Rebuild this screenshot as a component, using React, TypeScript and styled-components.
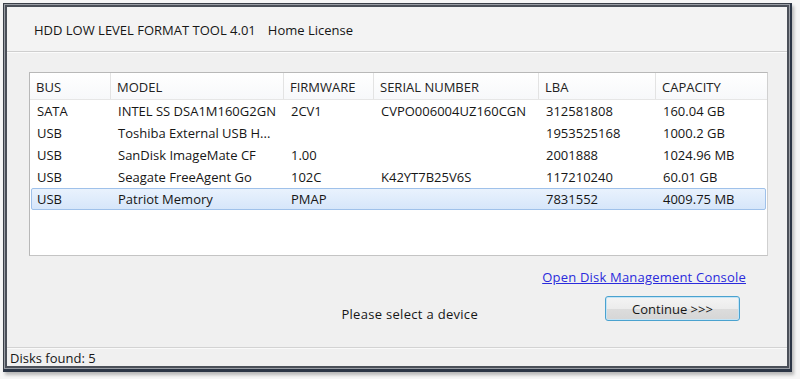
import styled, { createGlobalStyle } from "styled-components";

const GlobalStyle = createGlobalStyle`
  html, body {
    margin: 0;
    padding: 0;
    background: #f6f6f6;
  }
  body {
    font-family: "Open Sans", "Noto Sans", sans-serif;
    font-size: 13px;
    color: #161616;
  }
`;

type Disk = {
  bus: string;
  model: string;
  firmware: string;
  serial: string;
  lba: string;
  capacity: string;
};

const columns = ["BUS", "MODEL", "FIRMWARE", "SERIAL NUMBER", "LBA", "CAPACITY"];

const disks: Disk[] = [
  { bus: "SATA", model: "INTEL SS DSA1M160G2GN", firmware: "2CV1", serial: "CVPO006004UZ160CGN", lba: "312581808", capacity: "160.04 GB" },
  { bus: "USB", model: "Toshiba External USB H...", firmware: "", serial: "", lba: "1953525168", capacity: "1000.2 GB" },
  { bus: "USB", model: "SanDisk ImageMate CF", firmware: "1.00", serial: "", lba: "2001888", capacity: "1024.96 MB" },
  { bus: "USB", model: "Seagate FreeAgent Go", firmware: "102C", serial: "K42YT7B25V6S", lba: "117210240", capacity: "60.01 GB" },
  { bus: "USB", model: "Patriot Memory", firmware: "PMAP", serial: "", lba: "7831552", capacity: "4009.75 MB" },
];

export default function App() {
  return (
    <>
      <GlobalStyle />
      <Page>
        <Window>
          <TitleBar>
            <Title>HDD LOW LEVEL FORMAT TOOL 4.01</Title>
            <Title>Home License</Title>
          </TitleBar>
          <Content>
            <ListBox>
              <HeaderRow>
                {columns.map((c) => (
                  <HeaderCell key={c}>{c}</HeaderCell>
                ))}
              </HeaderRow>
              {disks.map((d, i) => (
                <Row key={i} $selected={i === disks.length - 1}>
                  <Cell>{d.bus}</Cell>
                  <Cell>{d.model}</Cell>
                  <Cell>{d.firmware}</Cell>
                  <Cell>{d.serial}</Cell>
                  <Cell>{d.lba}</Cell>
                  <Cell>{d.capacity}</Cell>
                </Row>
              ))}
            </ListBox>
            <LinkRow>
              <ConsoleLink href="#">Open Disk Management Console</ConsoleLink>
            </LinkRow>
            <ActionRow>
              <Message>Please select a device</Message>
              <ContinueButton>Continue &gt;&gt;&gt;</ContinueButton>
            </ActionRow>
          </Content>
          <StatusBar>Disks found: 5</StatusBar>
        </Window>
      </Page>
    </>
  );
}

const Page = styled.div`
  width: 800px;
  height: 379px;
  padding: 3px 0 0 3px;
  box-sizing: border-box;
`;

const Window = styled.div`
  width: 789px;
  height: 369px;
  box-sizing: border-box;
  border: 1px solid #3a3f48;
  border-right-width: 2px;
  border-bottom-width: 3px;
  border-bottom-color: #2c3646;
  border-right-color: #2c3646;
  box-shadow: inset 0 0 0 1px #9a9ea5, inset 0 0 0 3px #4a4f58,
    2px 3px 3px rgba(0, 0, 0, 0.25);
  padding: 3px 3px 1px 3px;
  background: #f0f0f0;
  display: flex;
  flex-direction: column;
`;

const TitleBar = styled.div`
  height: 45px;
  flex-shrink: 0;
  display: flex;
  align-items: center;
  gap: 12px;
  padding-left: 27px;
  padding-top: 1px;
  box-sizing: border-box;
  background: #f3f3f3;
  border-bottom: 1px solid #cfcfcf;
  box-shadow: 0 1px 0 #fbfbfb;
`;

const Title = styled.span`
  font-size: 13px;
  color: #161616;
`;

const Content = styled.div`
  flex: 1;
  display: flex;
  flex-direction: column;
  padding: 20px 19px 0 22px;
`;

const ListBox = styled.div`
  height: 184px;
  box-sizing: border-box;
  background: #fff;
  border: 1px solid #a9a9a9;
  border-color: #b8b8b8 #d0d0d0 #c4c4c4 #b8b8b8;
  display: flex;
  flex-direction: column;
`;

const grid = `
  display: grid;
  grid-template-columns: 81px 173px 90px 165px 117px 1fr;
`;

const HeaderRow = styled.div`
  ${grid}
  height: 26px;
  background: linear-gradient(#ffffff, #f7f8fa);
  border-bottom: 1px solid #e6e6e6;
`;

const HeaderCell = styled.div`
  display: flex;
  align-items: center;
  padding-left: 6px;
  padding-top: 2px;
  border-right: 1px solid #e3e3e3;
  color: #222;
  &:last-child {
    border-right: none;
  }
`;

const Row = styled.div<{ $selected?: boolean }>`
  ${grid}
  height: 22px;
  box-sizing: border-box;
  margin: 0 1px;
  border: 1px solid ${(p) => (p.$selected ? "#9fc1ea" : "transparent")};
  border-radius: 2px;
  background: ${(p) =>
    p.$selected ? "linear-gradient(#e9f2fd, #d6e6fa)" : "transparent"};
`;

const Cell = styled.div`
  display: flex;
  align-items: center;
  padding-left: 5px;
  white-space: nowrap;
  color: #161616;
`;

const LinkRow = styled.div`
  display: flex;
  justify-content: flex-end;
  padding: 12px 22px 0 0;
`;

const ConsoleLink = styled.a`
  color: #2b2bdc;
  text-decoration: underline;
  font-size: 13px;
  letter-spacing: 0.2px;
`;

const ActionRow = styled.div`
  display: flex;
  justify-content: flex-end;
  align-items: flex-end;
  gap: 127px;
  padding: 10px 28px 0 0;
`;

const Message = styled.span`
  font-size: 13px;
  color: #161616;
  letter-spacing: 0.3px;
  margin-bottom: -2px;
`;

const ContinueButton = styled.button`
  width: 135px;
  height: 25px;
  font-family: "Open Sans", "Noto Sans", sans-serif;
  font-size: 13px;
  color: #161616;
  border: 1px solid #4aa2cf;
  border-radius: 3px;
  box-shadow: inset 0 0 0 1px #c4e4f6;
  background: linear-gradient(#f4f4f4 0%, #ececec 50%, #dcdcdc 51%, #d6d6d6 100%);
  padding: 0;
`;

const StatusBar = styled.div`
  height: 20px;
  flex-shrink: 0;
  display: flex;
  align-items: center;
  padding-left: 3px;
  border-top: 1px solid #d3d3d3;
  box-shadow: inset 0 1px 0 #fafafa;
  font-size: 13px;
  color: #161616;
`;
